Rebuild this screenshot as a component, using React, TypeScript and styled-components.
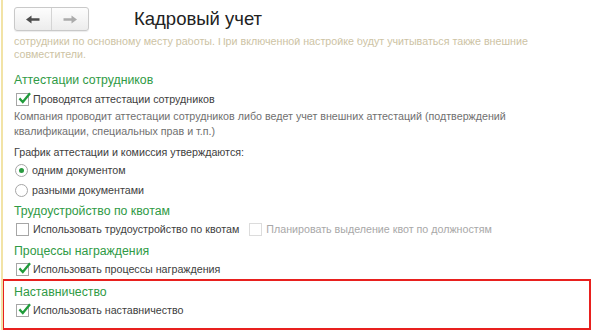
import React from "react";
import styled, { createGlobalStyle } from "styled-components";

const Global = createGlobalStyle`
  html, body { margin: 0; padding: 0; background: #fff; }
  body { font-family: "Liberation Sans", Arial, sans-serif; font-size: 10.7px; color: #404040; }
`;

const Page = styled.div`
  width: 593px;
  height: 330px;
  overflow: hidden;
  box-sizing: border-box;
  margin-left: 1px;
  border-left: 2px solid #f2e3a6;
  padding-right: 2px;
`;

const Header = styled.div`
  height: 38px;
  display: flex;
  align-items: center;
  padding-left: 11px;
`;

const NavGroup = styled.div`
  display: flex;
  height: 24px;
  box-sizing: border-box;
  border: 1px solid #c9c9c9;
  border-radius: 3px;
  background: linear-gradient(#fdfdfd, #ececec);
  box-shadow: 0 1px 1px rgba(0,0,0,0.08);
`;

const NavButton = styled.div<{ $divider?: boolean }>`
  width: 36px;
  display: flex;
  align-items: center;
  justify-content: center;
  border-left: ${(p) => (p.$divider ? "1px solid #d4d4d4" : "none")};
`;

const Title = styled.div`
  margin-left: 45px;
  font-size: 18.5px;
  color: #222;
`;

const FadedClip = styled.div`
  height: 22px;
  overflow: hidden;
  padding-left: 11px;
`;

const FadedText = styled.div`
  margin-top: -3px;
  line-height: 13px;
  color: #cdc3a4;
  width: 560px;
`;

const Body = styled.div`
  padding-left: 11px;
`;

const Heading = styled.div<{ $top: number }>`
  margin-top: ${(p) => p.$top}px;
  font-size: 12.3px;
  line-height: 17px;
  color: #2f9a45;
`;

const Row = styled.div<{ $top?: number }>`
  display: flex;
  align-items: center;
  height: 18px;
  margin-top: ${(p) => p.$top ?? 0}px;
`;

const Box = styled.span<{ $disabled?: boolean }>`
  position: relative;
  width: 13px;
  height: 13px;
  box-sizing: border-box;
  border: 1px solid ${(p) => (p.$disabled ? "#dcdcdc" : "#a6a6a6")};
  background: #fff;
  margin-left: 2px;
  margin-right: 4px;
  flex: none;
`;

const Tick = styled.svg`
  position: absolute;
  left: 1px;
  top: -2px;
`;

const Label = styled.span<{ $disabled?: boolean }>`
  color: ${(p) => (p.$disabled ? "#a8a8a8" : "#404040")};
  white-space: nowrap;
`;

const Gap = styled.span`
  width: 8px;
`;

const Radio = styled.span<{ $on?: boolean }>`
  width: 13px;
  height: 13px;
  box-sizing: border-box;
  border: 1px solid #a6a6a6;
  border-radius: 50%;
  margin-left: 1px;
  margin-right: 4px;
  display: flex;
  align-items: center;
  justify-content: center;
  flex: none;
  &::after {
    content: "";
    width: 5px;
    height: 5px;
    border-radius: 50%;
    background: ${(p) => (p.$on ? "#2a9a40" : "transparent")};
  }
`;

const Para = styled.div<{ $top: number; $color?: string }>`
  margin-top: ${(p) => p.$top}px;
  line-height: 15px;
  color: ${(p) => p.$color ?? "#404040"};
`;

const Highlight = styled.div`
  margin-top: 1px;
  margin-left: -1px;
  width: 589px;
  height: 51px;
  box-sizing: border-box;
  border: 2px solid #e8201e;
  padding: 3px 0 0 10px;
`;

const Arrow = ({ dir, color }: { dir: "left" | "right"; color: string }) => (
  <svg width="14" height="9" viewBox="0 0 14 9">
    <path
      d="M0 4.5 L5.5 0.5 L5.5 3.2 L13.5 3.2 L13.5 5.8 L5.5 5.8 L5.5 8.5 Z"
      fill={color}
      transform={dir === "right" ? "translate(14 0) scale(-1 1)" : undefined}
    />
  </svg>
);

const Check = ({ on, disabled }: { on?: boolean; disabled?: boolean }) => (
  <Box $disabled={disabled}>
    {on && (
      <Tick width="13" height="13" viewBox="0 0 13 13">
        <path d="M2.2 7.2 L4.8 10 L11.3 2.2" fill="none" stroke="#1f9b3a" strokeWidth="2.3" strokeLinecap="square" />
      </Tick>
    )}
  </Box>
);

export default function App() {
  return (
    <>
      <Global />
      <Page>
        <Header>
          <NavGroup>
            <NavButton><Arrow dir="left" color="#4d4d4d" /></NavButton>
            <NavButton $divider><Arrow dir="right" color="#ababab" /></NavButton>
          </NavGroup>
          <Title>Кадровый учет</Title>
        </Header>
        <FadedClip>
          <FadedText>
            сотрудники по основному месту работы. При включенной настройке будут учитываться также внешние
            <br />
            совместители.
          </FadedText>
        </FadedClip>
        <Body>
          <Heading $top={12}>Аттестации сотрудников</Heading>
          <Row $top={1}>
            <Check on />
            <Label>Проводятся аттестации сотрудников</Label>
          </Row>
          <Para $top={1} $color="#707070">
            Компания проводит аттестации сотрудников либо ведет учет внешних аттестаций (подтверждений
            <br />
            квалификации, специальных прав и т.п.)
          </Para>
          <Para $top={6}>График аттестации и комиссия утверждаются:</Para>
          <Row $top={1}>
            <Radio $on />
            <Label>одним документом</Label>
          </Row>
          <Row $top={2}>
            <Radio />
            <Label>разными документами</Label>
          </Row>
          <Heading $top={4}>Трудоустройство по квотам</Heading>
          <Row>
            <Check />
            <Label>Использовать трудоустройство по квотам</Label>
            <Gap />
            <Check disabled />
            <Label $disabled>Планировать выделение квот по должностям</Label>
          </Row>
          <Heading $top={5}>Процессы награждения</Heading>
          <Row>
            <Check on />
            <Label>Использовать процессы награждения</Label>
          </Row>
        </Body>
        <Highlight>
          <Heading $top={0}>Наставничество</Heading>
          <Row>
            <Check on />
            <Label>Использовать наставничество</Label>
          </Row>
        </Highlight>
      </Page>
    </>
  );
}
